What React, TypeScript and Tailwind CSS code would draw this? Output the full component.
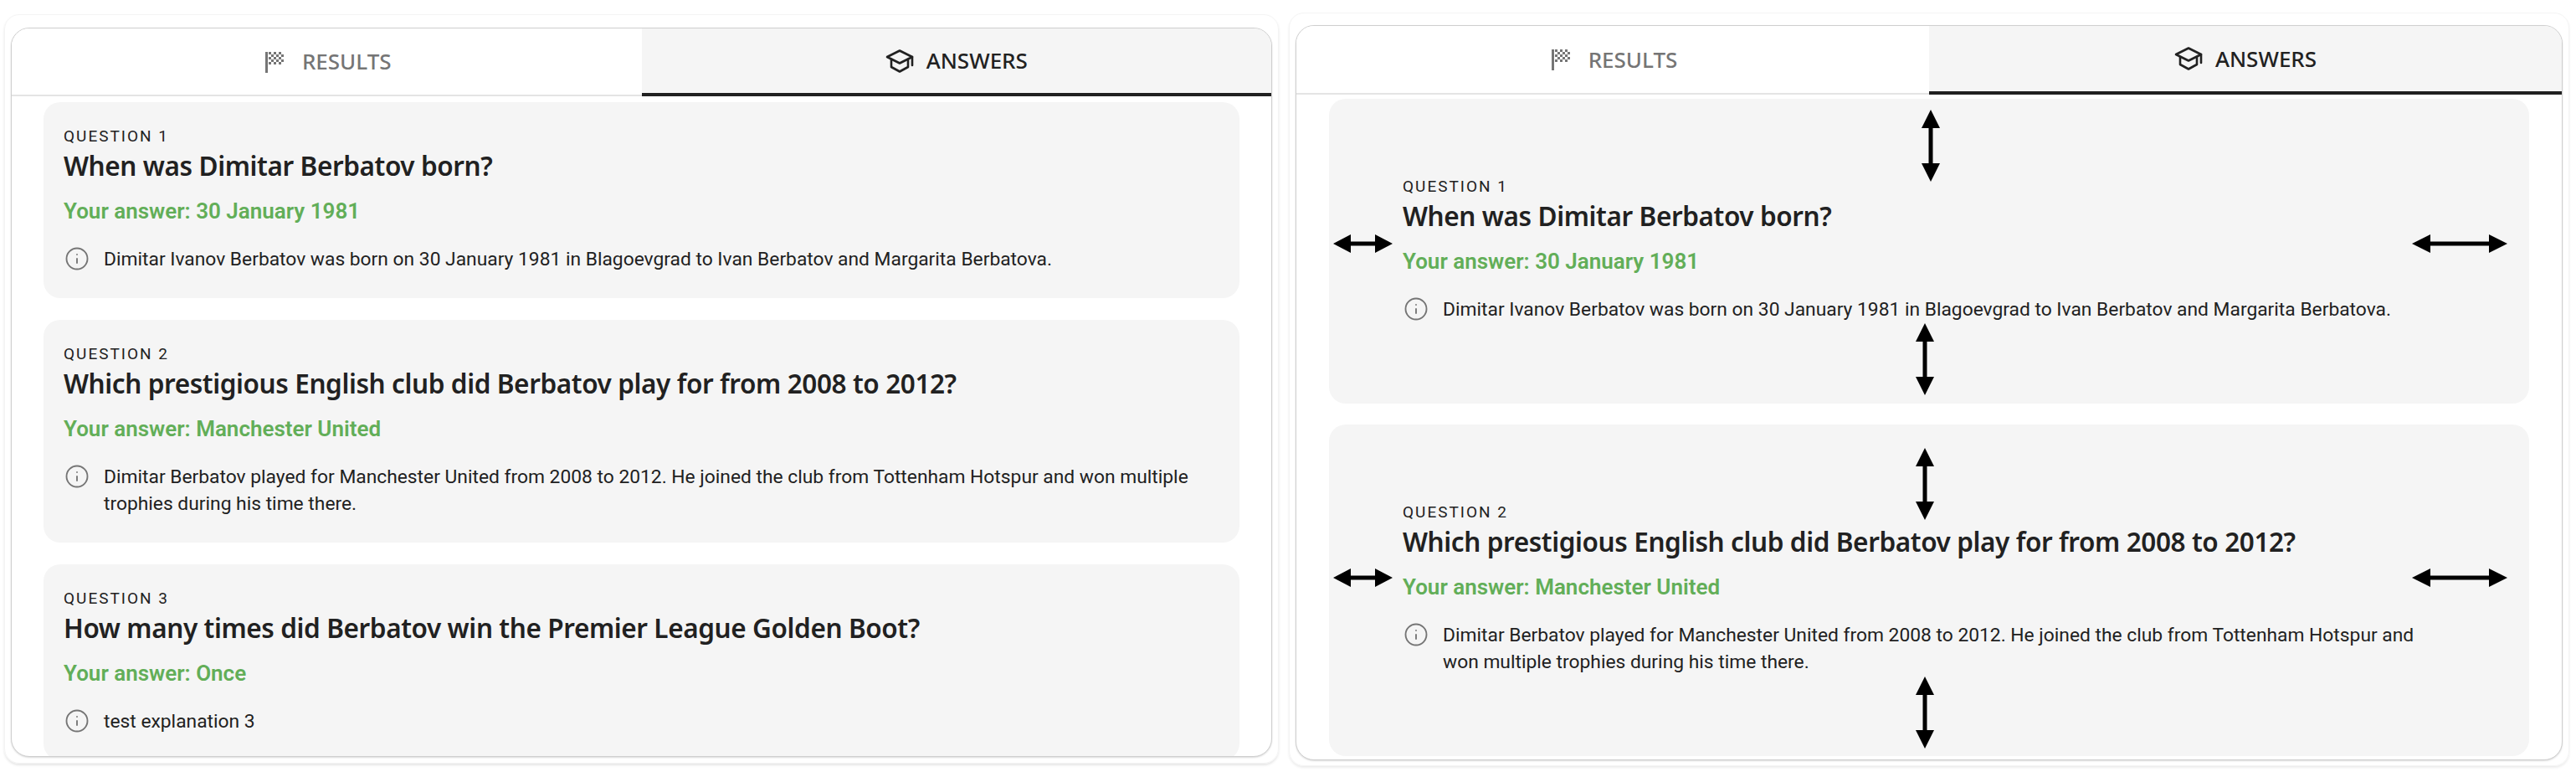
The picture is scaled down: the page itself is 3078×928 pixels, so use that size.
import React from 'react';
import { Info } from 'lucide-react';

const FlagIcon = () => (
    <svg width="24" height="26" viewBox="0 0 24 26" className="text-[#757575]">
        <rect x="1" y="1" width="3" height="25" fill="currentColor" />
        {[0, 1, 2, 3, 4].map((row) =>
            [0, 1, 2, 3, 4, 5].map((col) =>
                (row + col) % 2 === 0 ? (
                    <rect key={`${row}-${col}`} x={5 + col * 3} y={1 + row * 3} width="3" height="3" fill="currentColor" />
                ) : null
            )
        )}
    </svg>
);

const CapIcon = () => (
    <svg width="34" height="28" viewBox="0 0 34 28" fill="none" stroke="#212121" strokeWidth="2.6" strokeLinejoin="round" strokeLinecap="round">
        <path d="M17 1.5 32 9 17 16.5 2 9Z" />
        <path d="M7 12v9l10 5.5 10-5.5v-9" />
        <path d="M32 9v10" />
    </svg>
);

const Arrow = ({ className, vertical }: { className: string; vertical?: boolean }) => (
    <svg
        className={`absolute ${className}`}
        width={vertical ? 22 : 114}
        height={vertical ? 86 : 22}
        viewBox={vertical ? '0 0 22 86' : '0 0 114 22'}
        fill="#000"
    >
        {vertical ? (
            <path d="M11 0 22 22H13.5V64H22L11 86 0 64H8.5V22H0Z" />
        ) : (
            <path d="M0 11 22 0V8.5H92V0L114 11 92 22V13.5H22V22Z" />
        )}
    </svg>
);

const ShortArrow = ({ className }: { className: string }) => (
    <svg className={`absolute ${className}`} width="71" height="22" viewBox="0 0 71 22" fill="#000">
        <path d="M0 11 21 0V8.5H50V0L71 11 50 22V13.5H21V22Z" />
    </svg>
);

const questions = [
    {
        label: 'QUESTION 1',
        title: 'When was Dimitar Berbatov born?',
        answer: 'Your answer: 30 January 1981',
        text: 'Dimitar Ivanov Berbatov was born on 30 January 1981 in Blagoevgrad to Ivan Berbatov and Margarita Berbatova.',
    },
    {
        label: 'QUESTION 2',
        title: 'Which prestigious English club did Berbatov play for from 2008 to 2012?',
        answer: 'Your answer: Manchester United',
        text: 'Dimitar Berbatov played for Manchester United from 2008 to 2012. He joined the club from Tottenham Hotspur and won multiple trophies during his time there.',
    },
    {
        label: 'QUESTION 3',
        title: 'How many times did Berbatov win the Premier League Golden Boot?',
        answer: 'Your answer: Once',
        text: 'test explanation 3',
    },
];

const QuestionBody = ({ q }: { q: (typeof questions)[number] }) => (
    <>
        <div className="font-['Roboto',sans-serif] text-[19px] leading-[24px] font-normal tracking-[2px] text-[#212121]">{q.label}</div>
        <div className="mt-[1px] font-['Noto_Sans',sans-serif] text-[31.5px] leading-[44px] font-semibold tracking-[-0.4px] text-[#212121]">{q.title}</div>
        <div className="mt-[14px] font-['Roboto',sans-serif] text-[26px] leading-[36px] font-semibold text-[#62ae58]">{q.answer}</div>
        <div className="mt-[24px] flex items-start gap-[17px]">
            <Info size={30} strokeWidth={1.5} className="ml-[1px] shrink-0 text-[#757575]" />
            <p className="font-['Roboto',sans-serif] text-[22.8px] leading-[32px] text-[#212121]">{q.text}</p>
        </div>
    </>
);

const Tabs = ({ height }: { height: string }) => (
    <div className={`grid shrink-0 grid-cols-2 border-b-2 border-[#e4e4e4] font-['Noto_Sans',sans-serif] text-[26px] font-medium ${height}`}>
        <div className="flex items-center justify-center gap-[21px] bg-white pl-[3px] text-[#757575]">
            <FlagIcon />
            <span>RESULTS</span>
        </div>
        <div className="mb-[-2px] flex items-center justify-center gap-[15px] border-b-4 border-[#212121] bg-[#f5f5f5] text-[#212121]">
            <CapIcon />
            <span>ANSWERS</span>
        </div>
    </div>
);

export default function App() {
    return (
        <div className="flex h-[928px] w-[3078px] items-start overflow-hidden bg-white">
            {/* Left panel */}
            <div className="mt-[17px] ml-[5px] h-[895px] w-[1523px] shrink-0 rounded-[18px] border border-[#f4f4f4] px-[7px] pt-[15px] pb-[7px] shadow-[0_2px_3px_rgba(0,0,0,0.1)]">
                <div className="flex h-[871px] flex-col overflow-hidden rounded-[22px] border border-[#cfcfcf] bg-white shadow-[0_1px_2px_rgba(0,0,0,0.15)]">
                    <Tabs height="h-[81px]" />
                    <div className="flex flex-col gap-[26px] px-[38px] pt-[7px]">
                        {questions.map((q) => (
                            <div key={q.label} className="shrink-0 rounded-[20px] bg-[#f5f5f5] px-6 pt-[29px] pb-[30px]">
                                <QuestionBody q={q} />
                            </div>
                        ))}
                    </div>
                </div>
            </div>

            {/* Right panel */}
            <div className="mt-[15px] ml-[12px] h-[900px] w-[1530px] shrink-0 rounded-[18px] border border-[#f4f4f4] px-[7px] pt-[14px] pb-[7px] shadow-[0_2px_3px_rgba(0,0,0,0.08)]">
                <div className="flex h-[878px] flex-col overflow-hidden rounded-[22px] border border-[#cfcfcf] bg-white shadow-[0_1px_2px_rgba(0,0,0,0.15)]">
                    <Tabs height="h-[82px]" />
                    <div className="flex flex-col gap-[25px] px-[39px] pt-[5px]">
                        {questions.slice(0, 2).map((q, i) => (
                            <div key={q.label} className="relative shrink-0 rounded-[20px] bg-[#f5f5f5] pt-[93px] pr-[96px] pb-[96px] pl-[88px]">
                                <QuestionBody q={q} />
                                {i === 0 ? (
                                    <>
                                        <Arrow vertical className="top-[13px] left-[708px]" />
                                        <Arrow vertical className="top-[268px] left-[701px]" />
                                    </>
                                ) : (
                                    <>
                                        <Arrow vertical className="top-[28px] left-[701px]" />
                                        <Arrow vertical className="top-[301px] left-[701px]" />
                                    </>
                                )}
                                <ShortArrow className={i === 0 ? 'top-[162px] left-[5px]' : 'top-[172px] left-[5px]'} />
                                <Arrow className={i === 0 ? 'top-[162px] right-[26px]' : 'top-[172px] right-[26px]'} />
                            </div>
                        ))}
                    </div>
                </div>
            </div>
        </div>
    );
}
